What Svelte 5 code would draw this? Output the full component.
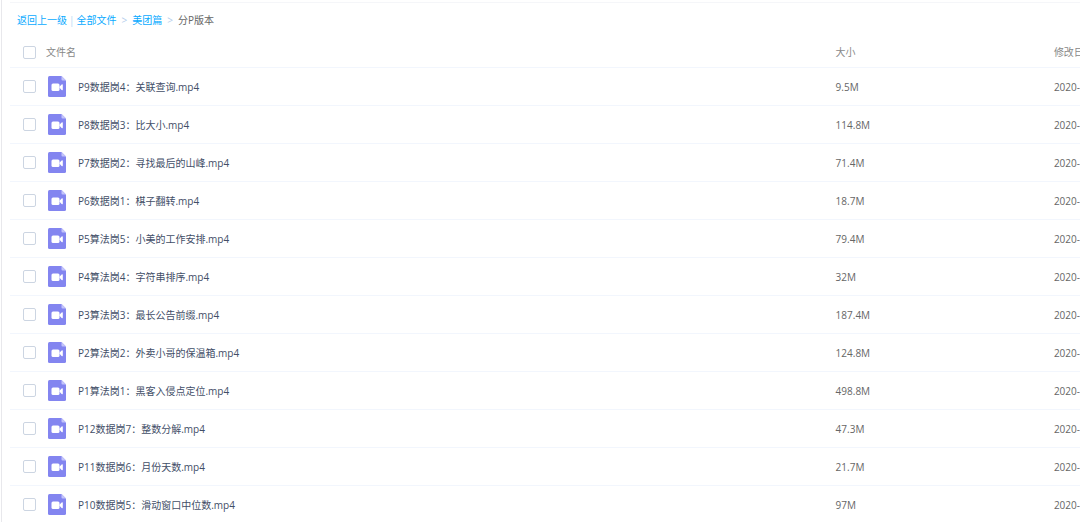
<script>
  const path = [
    { label: '全部文件', href: '#all' },
    { label: '美团篇', href: '#meituan' }
  ];

  const files = [
    { name: 'P9数据岗4：关联查询.mp4', size: '9.5M', date: '2020-' },
    { name: 'P8数据岗3：比大小.mp4', size: '114.8M', date: '2020-' },
    { name: 'P7数据岗2：寻找最后的山峰.mp4', size: '71.4M', date: '2020-' },
    { name: 'P6数据岗1：棋子翻转.mp4', size: '18.7M', date: '2020-' },
    { name: 'P5算法岗5：小美的工作安排.mp4', size: '79.4M', date: '2020-' },
    { name: 'P4算法岗4：字符串排序.mp4', size: '32M', date: '2020-' },
    { name: 'P3算法岗3：最长公告前缀.mp4', size: '187.4M', date: '2020-' },
    { name: 'P2算法岗2：外卖小哥的保温箱.mp4', size: '124.8M', date: '2020-' },
    { name: 'P1算法岗1：黑客入侵点定位.mp4', size: '498.8M', date: '2020-' },
    { name: 'P12数据岗7：整数分解.mp4', size: '47.3M', date: '2020-' },
    { name: 'P11数据岗6：月份天数.mp4', size: '21.7M', date: '2020-' },
    { name: 'P10数据岗5：滑动窗口中位数.mp4', size: '97M', date: '2020-' }
  ];

  let selected = $state(files.map(() => false));
  let allSelected = $derived(selected.every(Boolean));

  function toggleAll(event) {
    const checked = event.currentTarget.checked;
    selected = files.map(() => checked);
  }
</script>

<main class="file-panel">
  <nav class="breadcrumb">
    <a href="#back">返回上一级</a>
    <span class="divider">|</span>
    {#each path as item}
      <a href={item.href}>{item.label}</a>
      <span class="arrow">&gt;</span>
    {/each}
    <span class="current">分P版本</span>
  </nav>

  <table class="file-list">
    <thead>
      <tr>
        <th class="col-name">
          <div class="name-cell head">
            <input id="check-all" type="checkbox" checked={allSelected} onchange={toggleAll}>
            <label for="check-all">文件名</label>
          </div>
        </th>
        <th class="col-size">大小</th>
        <th class="col-date">修改日期</th>
      </tr>
    </thead>
    <tbody>
      {#each files as file, i}
        <tr>
          <td>
            <div class="name-cell">
              <input id="file-{i}" type="checkbox" bind:checked={selected[i]}>
              <svg class="file-icon" viewBox="0 0 18 21" aria-hidden="true">
                <path d="M1.5 0H13.5L18 4.5V19.5Q18 21 16.5 21H1.5Q0 21 0 19.5V1.5Q0 0 1.5 0Z" fill="#8385f0" />
                <path d="M13.5 0L18 4.5H14.5Q13.5 4.5 13.5 3.5Z" fill="#c3c4fa" />
                <rect x="3.5" y="7.5" width="8" height="7.5" rx="1.5" fill="#fff" />
                <path d="M11.5 10.8L13.6 8.6Q14.8 7.8 14.8 9V13.5Q14.8 14.7 13.6 13.9L11.5 11.7Z" fill="#fff" />
              </svg>
              <label for="file-{i}">{file.name}</label>
            </div>
          </td>
          <td class="meta">{file.size}</td>
          <td class="meta">{file.date}</td>
        </tr>
      {/each}
    </tbody>
  </table>
</main>

<style>
  :global(body) {
    background: #fff;
  }

  .file-panel {
    box-sizing: border-box;
    height: 100vh;
    overflow: hidden;
    margin-left: 1px;
    padding: 2px 0 0 8px;
    border-left: 1px solid #e8e8ec;
    font-family: "Open Sans", "Noto Sans CJK SC", sans-serif;
    font-size: 10px;
    line-height: 16px;
    color: #424e67;
  }

  .breadcrumb {
    display: flex;
    align-items: center;
    height: 34px;
    padding-left: 7px;
    border-top: 1px solid #f5f6f9;
    white-space: nowrap;
  }

  .breadcrumb a {
    color: #09aaff;
    text-decoration: none;
  }

  .divider {
    margin: 0 2px;
    color: #b5d9f5;
  }

  .arrow {
    margin: 0 5px;
    color: #b4cdec;
  }

  .current {
    color: #666;
  }

  /* wider than the panel, the date column runs off the right edge */
  .file-list {
    width: 120%;
    table-layout: fixed;
    border-collapse: separate;
    border-spacing: 0;
  }

  th,
  td {
    box-sizing: border-box;
    height: 38px;
    padding: 0;
    border-bottom: 1px solid #f2f6fd;
    text-align: left;
    vertical-align: middle;
    white-space: nowrap;
  }

  th {
    height: 31px;
    color: #888;
    font-weight: normal;
  }

  .col-name {
    width: 64.3%;
  }

  .col-size {
    width: 17%;
  }

  .name-cell {
    display: flex;
    align-items: center;
    padding-left: 13px;
  }

  input {
    appearance: none;
    box-sizing: border-box;
    width: 13px;
    height: 13px;
    margin: 0;
    border: 1px solid #ccd5e2;
    border-radius: 2px;
    background: #fff;
    cursor: pointer;
  }

  input:checked {
    border-color: #09aaff;
    background: #09aaff;
  }

  .head label {
    margin-left: 10px;
  }

  .file-icon {
    width: 18px;
    height: 21px;
    margin: 0 12px;
  }

  .meta {
    color: #666;
  }
</style>
